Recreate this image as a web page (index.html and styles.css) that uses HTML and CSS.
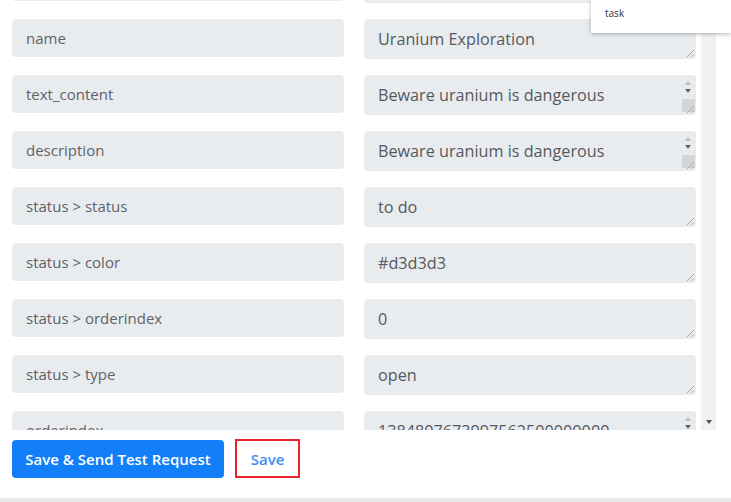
FILE: index.html
```html
<!DOCTYPE html>
<html lang="en">
<head>
  <meta charset="UTF-8" />
  <meta name="viewport" content="width=device-width, initial-scale=1.0"/>
  <title>Map Fields</title>
  <link rel="stylesheet" href="styles.css">
</head>
<body>

  <div class="page">
    <div class="scroller">
      <div class="fields">
        <div class="label">id</div>
        <div class="value">86bx1q2we<span class="grip"></span></div>

        <div class="label">name</div>
        <div class="value">Uranium Exploration<span class="grip"></span></div>

        <div class="label">text_content</div>
        <div class="value">Beware uranium is dangerous
          <span class="spin"><i class="up"></i><i class="down"></i><b class="grey"></b></span><span class="grip"></span>
        </div>

        <div class="label">description</div>
        <div class="value">Beware uranium is dangerous
          <span class="spin"><i class="up"></i><i class="down"></i><b class="grey"></b></span><span class="grip"></span>
        </div>

        <div class="label">status &gt; status</div>
        <div class="value">to do<span class="grip"></span></div>

        <div class="label">status &gt; color</div>
        <div class="value">#d3d3d3<span class="grip"></span></div>

        <div class="label">status &gt; orderindex</div>
        <div class="value">0<span class="grip"></span></div>

        <div class="label">status &gt; type</div>
        <div class="value">open<span class="grip"></span></div>

        <div class="label">orderindex</div>
        <div class="value">1384807673997562500000000
          <span class="spin"><i class="up"></i><i class="down"></i></span>
        </div>
      </div>

      <div class="scrollbar">
        <span class="arrow-down"></span>
      </div>
    </div>

    <div class="actions">
      <button class="btn-primary">Save &amp; Send Test Request</button>
      <button class="btn-save">Save</button>
    </div>
    <div class="bottom-strip"></div>

    <div class="popup">task</div>
  </div>

</body>
</html>
```

FILE: styles.css
```css
body {
  margin: 0;
  font-family: "Open Sans", Lato, sans-serif;
  background: #fff;
  color: #55595e;
}
.page {
  position: relative;
  width: 731px;
  height: 502px;
  overflow: hidden;
}
.scroller {
  display: flex;
  height: 430px;
  overflow: hidden;
}
.fields {
  display: grid;
  grid-template-columns: 332px 332px;
  grid-auto-rows: 40px;
  column-gap: 20px;
  row-gap: 16px;
  padding-left: 12px;
  margin-top: -37px;
  align-content: start;
}
.label {
  height: 38px;
  box-sizing: border-box;
  padding: 0 14px;
  display: flex;
  align-items: center;
  background: #e9ecef;
  border-radius: 4px;
  font-size: 15px;
  color: #5f6368;
}
.value {
  position: relative;
  height: 40px;
  box-sizing: border-box;
  padding: 0 14px;
  display: flex;
  align-items: center;
  background: #e9ecef;
  border-radius: 4px;
  font-size: 16.2px;
  color: #55595e;
  white-space: nowrap;
  overflow: hidden;
}
.grip {
  position: absolute;
  right: 2px;
  bottom: 2px;
  width: 7px;
  height: 7px;
  background: linear-gradient(135deg, transparent 45%, #a9acb0 45%, #a9acb0 55%, transparent 55%, transparent 75%, #a9acb0 75%, #a9acb0 85%, transparent 85%);
}
.spin {
  position: absolute;
  right: 0;
  top: 0;
  width: 16px;
  height: 40px;
  display: flex;
  flex-direction: column;
  align-items: center;
  padding-top: 6px;
  box-sizing: border-box;
  background: #e9ecef;
}
.spin i {
  width: 0;
  height: 0;
  border-left: 3px solid transparent;
  border-right: 3px solid transparent;
  margin-bottom: 4px;
}
.spin .up {
  border-bottom: 4px solid #b8bbbf;
}
.spin .down {
  border-top: 4px solid #5f6368;
}
.spin .grey {
  width: 13px;
  height: 13px;
  margin-top: 2px;
  background: #d3d5d8;
}
.scrollbar {
  width: 15px;
  margin-left: 5px;
  background: #f1f1f1;
  display: flex;
  flex-direction: column;
  justify-content: flex-end;
  align-items: center;
  padding-bottom: 6px;
  box-sizing: border-box;
}
.arrow-down {
  width: 0;
  height: 0;
  border-left: 3px solid transparent;
  border-right: 3px solid transparent;
  border-top: 4px solid #505050;
}
.actions {
  display: flex;
  align-items: flex-start;
  gap: 11px;
  height: 68px;
  padding: 9px 0 0 12px;
  box-sizing: border-box;
}
.actions button {
  font-family: "Open Sans", Lato, sans-serif;
  font-size: 15px;
  font-weight: 600;
  border-radius: 4px;
  cursor: pointer;
  padding: 0;
}
.btn-primary {
  width: 212px;
  height: 38px;
  margin-top: 1px;
  background: #127ef8;
  color: #fff;
  border: none;
}
.btn-save {
  width: 65px;
  height: 39px;
  background: #fff;
  color: #3d8ef0;
  border: 2px solid #e8242a;
  border-radius: 0 !important;
}
.bottom-strip {
  height: 4px;
  background: #e8e8e8;
}
.popup {
  position: absolute;
  top: 0;
  right: 0;
  width: 140px;
  height: 33px;
  box-sizing: border-box;
  padding: 6px 14px;
  background: #fff;
  box-shadow: 0 1px 4px rgba(0,0,0,0.3);
  font-size: 10px;
  color: #333;
}
```
